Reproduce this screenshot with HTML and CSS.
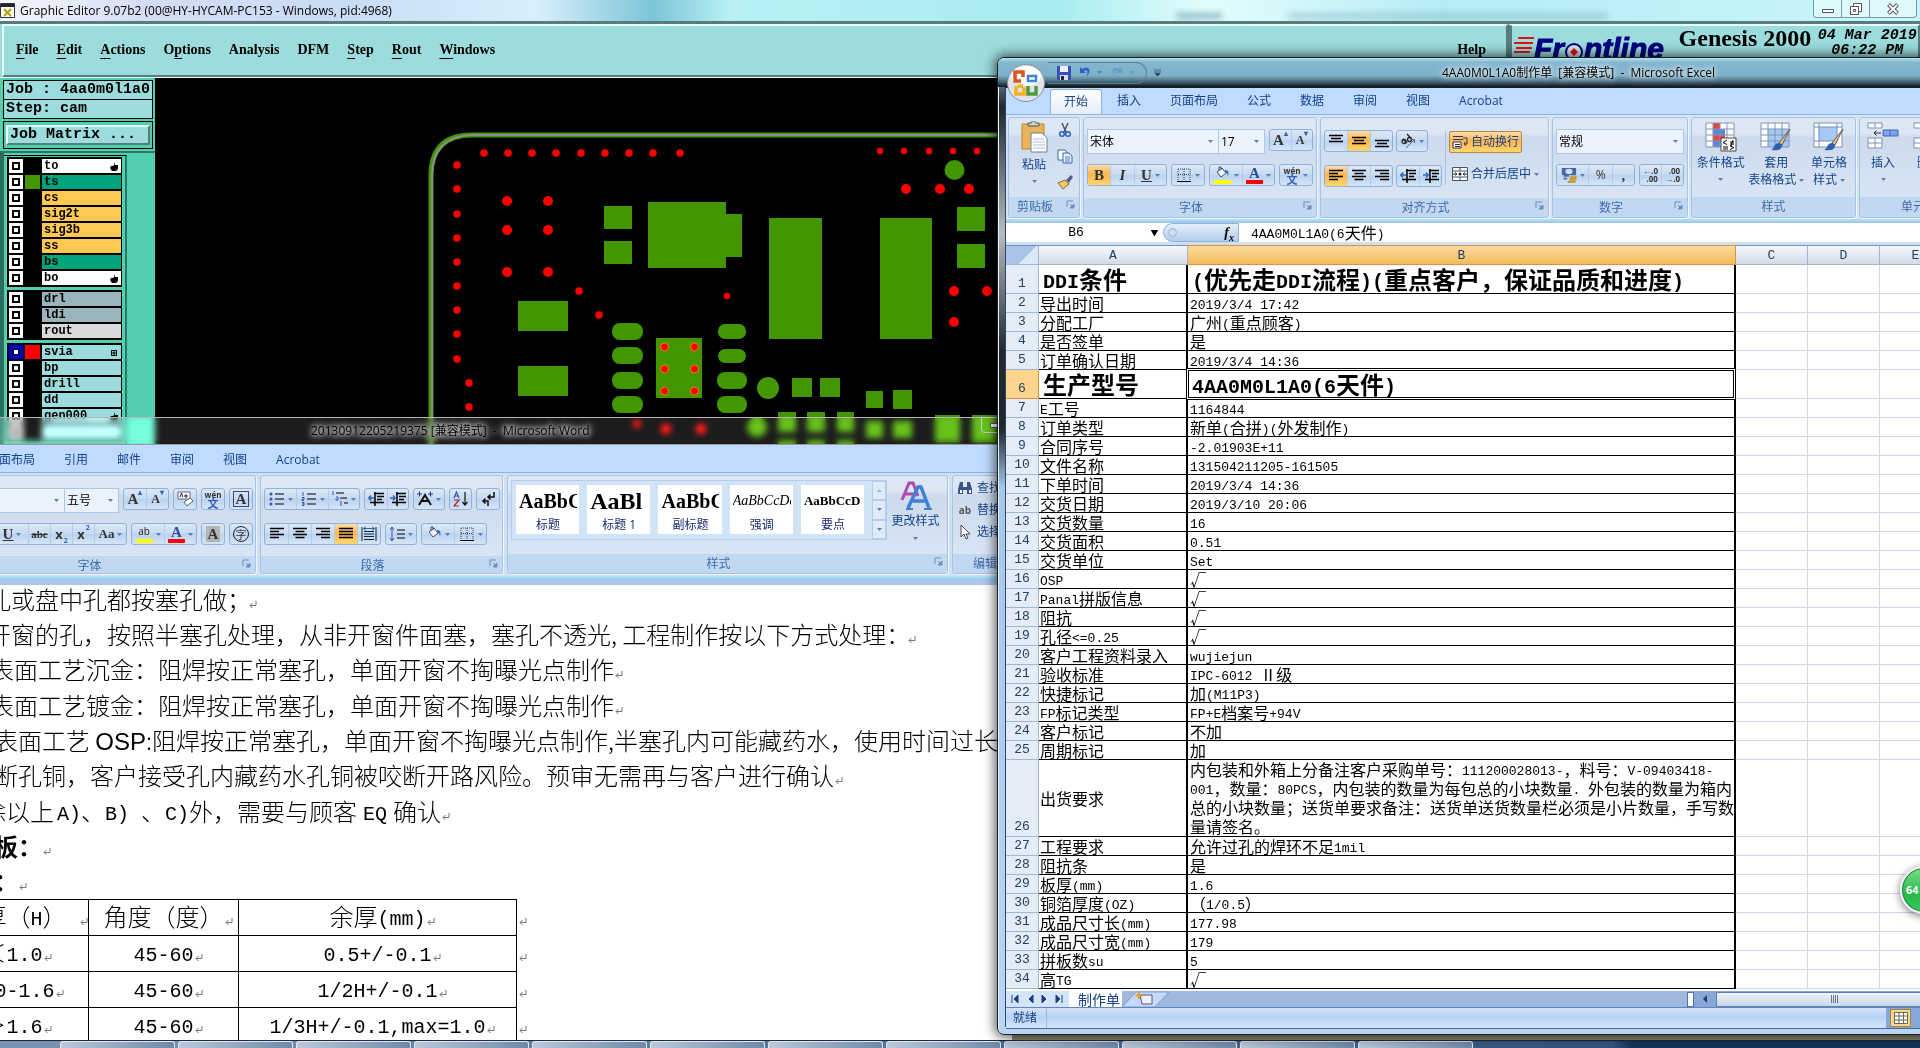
FILE: index.html
```html
<!DOCTYPE html>
<html lang="zh-CN">
<head>
<meta charset="utf-8">
<title>Desktop</title>
<link rel="stylesheet" href="styles.css">
</head>
<body>
<svg class="defs" aria-hidden="true">
  <defs>
    <symbol id="ret" viewBox="0 0 8 8"><path d="M7 0v4.500H1M3.500 2L1 4.500 3.500 7" fill="none" stroke="#777"/></symbol>
    <symbol id="dd" viewBox="0 0 5 3"><path d="M0 0h5L2.500 3z" fill="#5a7fb0"/></symbol>
    <symbol id="launch" viewBox="0 0 9 9"><path d="M1 7V1h6" fill="none" stroke="#6a8fc0"/><path d="M8 4v4H4zM4 4l3 3" stroke="#6a8fc0" fill="#6a8fc0"/></symbol>
    <symbol id="al" viewBox="0 0 16 16"><path d="M1 2.500h14M1 5.500h9M1 8.500h14M1 11.500h9" stroke="#000" stroke-width="1.500"/></symbol>
    <symbol id="ac" viewBox="0 0 16 16"><path d="M1 2.500h14M3.500 5.500h9M1 8.500h14M3.500 11.500h9" stroke="#000" stroke-width="1.500"/></symbol>
    <symbol id="ar" viewBox="0 0 16 16"><path d="M1 2.500h14M6 5.500h9M1 8.500h14M6 11.500h9" stroke="#000" stroke-width="1.500"/></symbol>
    <symbol id="aj" viewBox="0 0 16 16"><path d="M1 2.500h14M1 5.500h14M1 8.500h14M1 11.500h14" stroke="#000" stroke-width="1.500"/></symbol>
    <symbol id="ad" viewBox="0 0 16 16"><path d="M1 1v14M15 1v14M3 5.500h10M3 8h10M3 10.500h10M3 13.500h10" stroke="#123" fill="none"/><path d="M2 2.500h12M5 .5L2.500 2.500 5 4.500M11 .5l2.500 2L11 4.500" stroke="#36a" fill="none"/></symbol>
    <symbol id="vt" viewBox="0 0 16 16"><path d="M1 2.500h14M3 5.500h10M1 8.500h14" stroke="#000" stroke-width="1.500"/></symbol>
    <symbol id="vm" viewBox="0 0 16 16"><path d="M1 4.500h14M3 7.500h10M1 10.500h14" stroke="#000" stroke-width="1.500"/></symbol>
    <symbol id="vb" viewBox="0 0 16 16"><path d="M1 7.500h14M3 10.500h10M1 13.500h14" stroke="#000" stroke-width="1.500"/></symbol>
    <symbol id="indl" viewBox="0 0 16 16"><path d="M6 2.500h10M9 5.500h7M9 8.500h5M2 11.500h14M7 1v14" stroke="#000" stroke-width="1.500"/><path d="M6 7H1M3 4.500L.8 7 3 9.500" stroke="#36b" fill="none" stroke-width="1.500"/></symbol>
    <symbol id="indr" viewBox="0 0 16 16"><path d="M6 2.500h10M9 5.500h7M9 8.500h5M2 11.500h14M7 1v14" stroke="#000" stroke-width="1.500"/><path d="M0 7h5M3 4.500L5.200 7 3 9.500" stroke="#36b" fill="none" stroke-width="1.500"/></symbol>
    <symbol id="borders" viewBox="0 0 16 16"><path d="M2 2h12M2 7.500h12M2 2v12M8 2v12M14 2v12" stroke="#345" stroke-dasharray="1 1" fill="none"/><path d="M1 14.500h14" stroke="#000"/></symbol>
    <symbol id="bucket" viewBox="0 0 16 16"><path d="M3 6l5-4 4 5-5 4z" fill="#eef4fb" stroke="#456"/><path d="M5 5V1h2v3" fill="none" stroke="#456"/><path d="M11 4c4 0 4 3 3 6-1-3-1-3-3-3z" fill="#3a6cb8"/></symbol>
    <symbol id="undo" viewBox="0 0 16 16"><path d="M3 2v6h6L7 6c3-2 5 1 2 6 6-5 4-12-4-8z" fill="#2c5fc4"/></symbol>
    <symbol id="save" viewBox="0 0 16 16"><path d="M1 1h14v14H1z" fill="#3b4fb8"/><path d="M4 1h8v6H4z" fill="#eef"/><path d="M4 10h8v5H4z" fill="#dde"/><path d="M5 11h3v4H5z" fill="#224"/></symbol>
    <symbol id="office" viewBox="0 0 40 40"><circle cx="20" cy="20" r="18.500" fill="#dfe4ea" stroke="#8a929c"/><ellipse cx="20" cy="13" rx="15" ry="10" fill="#fff"/><g fill="none" stroke-width="3.500"><path d="M17 14V9h-8v9h6" stroke="#e0531f"/><path d="M10 23v8h8v-7M12 23h5" stroke="#f4b223"/><path d="M22 13v5h8v-5z" stroke="#3f86d6" stroke-width="2.500"/><path d="M22 23v8h8v-8" stroke="#4d9a3a"/></g></symbol>
    <symbol id="paste" viewBox="0 0 28 32"><path d="M2 3h22v25H2z" fill="#e9b45a" stroke="#b98531"/><path d="M8 5V2h3c1-3 4-3 5 0h3v3z" fill="#c8cdd4" stroke="#555"/><path d="M11 12h11l5 5v14H11z" fill="#fff" stroke="#6a7f9c"/><path d="M13 18h11M13 21h12M13 24h12M13 27h12" stroke="#a9bdd6"/></symbol>
    <symbol id="cut" viewBox="0 0 16 16"><path d="M5 1l4 9M11 1L7 10" stroke="#456" stroke-width="1.500"/><circle cx="5" cy="12" r="2.300" fill="none" stroke="#2c5fc4" stroke-width="1.500"/><circle cx="11" cy="12" r="2.300" fill="none" stroke="#2c5fc4" stroke-width="1.500"/></symbol>
    <symbol id="copy" viewBox="0 0 16 16"><path d="M1 2h7l2 2v8H1z" fill="#fff" stroke="#36a"/><path d="M6 5h6l3 3v7H6z" fill="#e4eefb" stroke="#36a"/><path d="M8 9h5M8 11h5M8 13h5" stroke="#36a" stroke-width=".8"/></symbol>
    <symbol id="brush" viewBox="0 0 16 16"><path d="M1 9l7-3 4 4-6 5z" fill="#f0c766" stroke="#8a6a2a"/><path d="M9 6l5-5 2 2-4 6z" fill="#555e8a"/></symbol>
    <symbol id="orient" viewBox="0 0 16 16"><g fill="none" stroke="#222" stroke-width="1.300"><circle cx="4" cy="8.500" r="2"/><path d="M3 6l4 4M7 1l4.500 5"/><circle cx="9.500" cy="6.500" r="2"/></g><path d="M6 15l8-8M14.500 6.500H11M14.500 6.500V10" stroke="#567" fill="none"/></symbol>
    <symbol id="wrap" viewBox="0 0 16 16"><path d="M1 2.500h10M1 5.500h10" stroke="#335"/><path d="M1 8h8v6H1z" fill="#fff" stroke="#335"/><path d="M3 10.500h5M3 12.500h5M11 4h4v6h-3M13.500 8L12 10l2 2" stroke="#335" fill="none"/></symbol>
    <symbol id="merge" viewBox="0 0 16 16"><path d="M.5 1.500h15v13H.5zM.5 5h15M.5 11h15M8 1v4M8 11v3" fill="#fff" stroke="#456"/><path d="M1 8h4M3 6.500L5 8 3 9.500M15 8h-4M13 6.500L11 8l2 1.500" stroke="#234" fill="none"/><circle cx="8" cy="8" r="1.500" fill="#222"/></symbol>
    <symbol id="money" viewBox="0 0 18 18"><path d="M1 1h16v8H1z" fill="#4668a8"/><ellipse cx="9" cy="5" rx="4" ry="3" fill="#cfe0f4"/><path d="M3 10h6M3 13h4" stroke="#4668a8" stroke-width="2"/><path d="M11 10h6v2h-6zM10 13h7v2h-7zM8 16h8v1.500H8z" fill="#e8b530" stroke="#a27612" stroke-width=".6"/></symbol>
    <symbol id="cond" viewBox="0 0 32 32"><path d="M1 1h28v24H1z" fill="#fff"/><path d="M8 1h7v6H8zM8 13h12v6H8z" fill="#e4483e"/><path d="M8 7h12v6H8zM8 19h7v6H8z" fill="#5c86dd"/><path d="M1 1h28v24H1zM1 7h28M1 13h28M1 19h28M8 1v24M15 1v24M22 1v24" stroke="#8294b4" fill="none"/><path d="M16 16h15v13H16z" fill="#fff" stroke="#444"/><path d="M22 18l-4 2.500 4 2M18 25h5M18 27h5M25 20h4M25 22h4M28 18l-2 6M25 24l4 1.500-4 2" stroke="#000" fill="none"/></symbol>
    <symbol id="fmtt" viewBox="0 0 32 32"><path d="M1 1h28v24H1z" fill="#fff"/><path d="M8 7h21v18H8z" fill="#a8c8f4"/><path d="M1 1h28v24H1zM1 7h28M1 13h28M1 19h28M8 1v24M15 1v24M22 1v24" stroke="#7d92b8" fill="none"/><path d="M30 7L19 21l3 2z" fill="#d8c7a4" stroke="#6b5b44"/><path d="M19 21c-5 0-4 5-8 7 6 1 11 0 11-5z" fill="#2f5fae"/></symbol>
    <symbol id="cells" viewBox="0 0 32 32"><path d="M1 1h28v24H1z" fill="#fff" stroke="#7d92b8"/><path d="M6 5h18v14H6z" fill="#a8c8f4" stroke="#6a8fd0"/><path d="M1 5h5M1 19h5M24 5h5M6 1v4M24 1v4M6 19v6" stroke="#7d92b8"/><path d="M30 7L19 21l3 2z" fill="#d8c7a4" stroke="#6b5b44"/><path d="M19 21c-5 0-4 5-8 7 6 1 11 0 11-5z" fill="#2f5fae"/></symbol>
    <symbol id="ins" viewBox="0 0 32 32"><path d="M1 1h14v5H1zM8 1v5M1 16h14v10H1zM8 16v10M1 21h14" fill="#fff" stroke="#7d92b8"/><path d="M16 8h15v6H16z" fill="#7da4ea" stroke="#3f66b4"/><path d="M23 8v6" stroke="#3f66b4"/><path d="M14 11H7M9.500 8.500L7 11l2.500 2.500" stroke="#223" fill="none"/></symbol>
    <symbol id="del" viewBox="0 0 32 32"><path d="M1 1h14v5H1zM8 1v5M1 16h14v10H1zM8 16v10M1 21h14" fill="#fff" stroke="#7d92b8"/><path d="M8 6v10" stroke="#345" stroke-dasharray="1 1"/></symbol>
    <symbol id="bul" viewBox="0 0 16 16"><path d="M6 3h9M6 8h9M6 13h9" stroke="#000" stroke-width="1.200"/><circle cx="2" cy="3" r="1.500" fill="#35a"/><circle cx="2" cy="8" r="1.500" fill="#35a"/><circle cx="2" cy="13" r="1.500" fill="#35a"/></symbol>
    <symbol id="num" viewBox="0 0 16 16"><path d="M6 3h9M6 8h9M6 13h9" stroke="#000" stroke-width="1.200"/><path d="M2 1v4M1 6.500h2v1.500H1v1.500h2M1 11.500h2v3H1M1 13h2" stroke="#35a" fill="none"/></symbol>
    <symbol id="multi" viewBox="0 0 16 16"><path d="M4 2h8M8 7h7M12 12h4" stroke="#000" stroke-width="1.200"/><path d="M1 0v4M4 6h2v3H4V7.500M9 10v5" stroke="#35a" fill="none"/></symbol>
    <symbol id="asian" viewBox="0 0 16 16"><path d="M2 14L8 4l6 10M4.500 10h7" stroke="#111" stroke-width="2" fill="none"/><path d="M0 3h5M2.500 .5v5M11 3h5M13.500 .5v5" stroke="#2230a0"/></symbol>
    <symbol id="sort" viewBox="0 0 16 16"><path d="M1 7l2.500-6L6 7M2 5h3" stroke="#35a" fill="none" stroke-width="1.200"/><path d="M1 9h5L1 15h5" stroke="#a23" fill="none" stroke-width="1.200"/><path d="M12 1v13M9.500 11l2.500 3 2.500-3" stroke="#111" fill="none" stroke-width="1.200"/></symbol>
    <symbol id="marks" viewBox="0 0 16 16"><path d="M14 1v5H8M10.500 3.500L8 6l2.500 2.500M8 15v-5H3M5.500 7.500L3 10l2.500 2.500" stroke="#111" fill="none" stroke-width="1.500"/></symbol>
    <symbol id="spacing" viewBox="0 0 16 16"><path d="M8 4h8M8 8h8M8 12h8" stroke="#000" stroke-width="1.200"/><path d="M3 1v14M1 4l2-3 2 3M1 12l2 3 2-3" stroke="#35a" fill="none"/></symbol>
    <symbol id="styles" viewBox="0 0 32 32"><path d="M2 20L9 3h4l5 13M5 14h9" stroke="#b04ab0" stroke-width="3" fill="none"/><path d="M8 28L18 7h3l8 21M13 21h12" stroke="#3f7fd4" stroke-width="3.500" fill="none"/><path d="M6 29h7M24 29h8" stroke="#3f7fd4" stroke-width="2"/></symbol>
    <symbol id="find" viewBox="0 0 16 16"><path d="M3 2h3v5h4V2h3l2 7v5h-5v-4H6v4H1V9z" fill="#3a5688"/><path d="M3 10h2v3H3zM12 10h2v3h-2z" fill="#fff"/></symbol>
    <symbol id="arrow" viewBox="0 0 16 16"><path d="M4 1v12l3-3 2 5 2-1-2-4h4z" fill="#fff" stroke="#445"/></symbol>
    <symbol id="erase" viewBox="0 0 16 16"><path d="M1 1h12v7H1z" fill="#fff" stroke="#667"/><path d="M3 6l1.500-4L6 6M8 4h2v2H8z" stroke="#223" fill="none"/><path d="M7 11l6-4 3 3-6 5z" fill="#fff" stroke="#567"/></symbol>
    <symbol id="hand" viewBox="0 0 8 9"><path d="M5 0v3h3v4L6 9H2L0 6l1-2h2l1-1z" fill="#000"/></symbol>
  </defs>
</svg>

<main class="desktop">
  <section class="genesis" aria-label="Graphic Editor">
    <header class="g-title">
      <svg class="g-ico" viewBox="0 0 15 15"><path d="M.5.500h14v14H.5z" fill="#fff" stroke="#333"/><path d="M1 1h13v3H1z" fill="#223"/><path d="M4 6l7 7M11 6l-7 7" stroke="#b8a000" stroke-width="2"/></svg>
      <span class="g-cap">Graphic Editor 9.07b2 (00@HY-HYCAM-PC153 - Windows, pid:4968)</span>
      <i class="smudge s1"></i><i class="smudge s2"></i>
      <div class="winctl">
        <button aria-label="Minimize"><svg width="12" height="12"><path d="M.5 6.500h11v3H.5z" fill="#fff" stroke="#556"/></svg></button>
        <button aria-label="Restore"><svg width="12" height="12"><path d="M3.500.500h8v8h-8z" fill="#fff" stroke="#556"/><path d="M.5 3.500h8v8h-8z" fill="#fff" stroke="#556"/><path d="M3.500 6.500h2v2h-2z" fill="#fff" stroke="#556"/></svg></button>
        <button aria-label="Close"><svg width="12" height="12"><path d="M1.500 1.500l9 9M10.500 1.500l-9 9" stroke="#556" stroke-width="4"/><path d="M2 2l8 8M10 2l-8 8" stroke="#fff" stroke-width="2"/></svg></button>
      </div>
    </header>
    <div class="g-bar">
      <nav class="g-menu">
        <a href="#"><u>F</u>ile</a><a href="#"><u>E</u>dit</a><a href="#"><u>A</u>ctions</a><a href="#">O<u>p</u>tions</a><a href="#">Analysis</a><a href="#">DFM</a><a href="#"><u>S</u>tep</a><a href="#"><u>R</u>out</a><a href="#"><u>W</u>indows</a><a href="#" class="help">Help</a>
      </nav>
      <div class="g-brand">
        <svg class="stripes" viewBox="0 0 20 20"><path d="M4 1h16M0 6h19M2 11h16M0 15h16" stroke="#e01010" stroke-width="2"/></svg>
        <span class="logo">Fr<svg viewBox="0 0 20 20" class="ring"><circle cx="10" cy="10" r="8" fill="#cfe6ea" stroke="#000080" stroke-width="2"/><path d="M10 6l4 4-4 4-4-4z" fill="#e01010"/></svg>ntline</span>
        <strong>Genesis 2000</strong>
        <time>04 Mar 2019<br>06:22 PM</time>
      </div>
    </div>
    <div class="g-work">
      <aside class="g-side">
        <div class="job">Job : 4aa0m0l1a0</div>
        <div class="job">Step: cam</div>
        <div class="jm"><button>Job Matrix ...</button></div>
        <div class="g-lists">
          <div class="layers">
            <div class="lg">
              <label class="w"><input type="checkbox"><i></i><span>to</span><svg class="hand"><use href="#hand"/></svg></label>
              <label class="g"><input type="checkbox"><i class="green"></i><span>ts</span></label>
              <label class="o"><input type="checkbox"><i></i><span>cs</span></label>
              <label class="o"><input type="checkbox"><i></i><span>sig2t</span></label>
              <label class="o"><input type="checkbox"><i></i><span>sig3b</span></label>
              <label class="o"><input type="checkbox"><i></i><span>ss</span></label>
              <label class="g"><input type="checkbox"><i></i><span>bs</span></label>
              <label class="w"><input type="checkbox"><i></i><span>bo</span><svg class="hand"><use href="#hand"/></svg></label>
            </div>
            <div class="lg">
              <label class="d"><input type="checkbox"><i></i><span>drl</span></label>
              <label class="d"><input type="checkbox"><i></i><span>ldi</span></label>
              <label class="r"><input type="checkbox"><i></i><span>rout</span></label>
            </div>
            <div class="lg">
              <label class="c"><input type="checkbox" class="on"><i class="red"></i><span>svia</span><svg class="hand" viewBox="0 0 8 9"><path d="M1.500 2.500h5v5h-5zM4 2v6M1 5h6" fill="none" stroke="#000"/></svg></label>
              <label class="c"><input type="checkbox"><i></i><span>bp</span></label>
              <label class="c"><input type="checkbox"><i></i><span>drill</span></label>
              <label class="c"><input type="checkbox"><i></i><span>dd</span></label>
              <label class="c"><input type="checkbox"><i></i><span>gen000</span><svg class="hand"><use href="#hand"/></svg></label>
              <label class="c last"><input type="checkbox" aria-label="layer"><i></i><span></span></label>
            </div>
          </div>
        </div>
      </aside>
      <svg class="pcb" viewBox="155 78 900 500" width="900" height="500">
        <path d="M431 600V176Q431 135 472 135H1100" fill="none" stroke="#449600" stroke-width="5"/>
        <path d="M432 600V176Q432 136 472 135H1100" fill="none" stroke="#8d8d8d" stroke-width="2"/>
        <g fill="#449600">
          <path d="M604 206h28v23h-28zM604 241h28v23h-28zM648 202h78v12h16v43h-16v11h-78zM769 218h53v121h-53zM880 218h52v121h-52zM957 207h28v24h-28zM957 244h28v24h-28zM518 301h50v30h-50zM518 366h50v30h-50zM656 338h46v60h-46zM792 378h20v19h-20zM820 378h20v19h-20zM866 391h17v17h-17zM893 390h19v19h-19z"/>
          <path d="M778 412h18v20h-18zM807 412h18v20h-18zM837 412h17v20h-17zM866 421h17v17h-17zM893 421h19v17h-19zM935 415h25v27h-25zM972 415h25v27h-25zM778 440h18v8h-18zM807 440h18v8h-18zM837 440h17v8h-17z"/>
          <circle cx="954.500" cy="170" r="10"/><circle cx="768" cy="388" r="11"/><circle cx="757" cy="427" r="10"/>
          <rect x="612" y="323" width="31" height="17" rx="8"/><rect x="612" y="347" width="31" height="17" rx="8"/><rect x="612" y="372" width="31" height="17" rx="8"/><rect x="612" y="396" width="31" height="17" rx="8"/>
          <rect x="718" y="324" width="28" height="15" rx="7"/><rect x="718" y="349" width="28" height="14" rx="7"/><rect x="717" y="372" width="30" height="17" rx="8"/><rect x="717" y="396" width="30" height="17" rx="8"/>
        </g>
        <g fill="none" stroke="#f00" stroke-linecap="round">
          <path stroke-width="7.500" d="M484 153h0M508 153h0M532 153h0M556 153h0M581 153h0M605 153h0M629 153h0M653 153h0M680 153h0M457 165h0M457 189h0M457 214h0M457 238h0M457 262h0M457 286h0M457 310h0M457 334h0M457 359h0M469 383h0M469 407h0M579 291h0M599 315h0M637 424h0"/>
          <path stroke-width="6.500" d="M727 296h0M880 151h0M904 151h0M929 151h0M953 151h0M977 151h0"/>
          <path stroke-width="10" d="M507 201h0M548 201h0M507 230h0M548 230h0M507 272h0M548 272h0M906 189h0M940 189h0M969 189h0M954 291h0M987 291h0M954 322h0M666 429h0M701 429h0"/>
        </g>
        <g fill="#f00" stroke="#f08000"><circle cx="664.500" cy="347" r="4"/><circle cx="694.500" cy="347" r="4"/><circle cx="664.500" cy="369" r="4"/><circle cx="694.500" cy="369" r="4"/><circle cx="664.500" cy="391" r="4"/><circle cx="694.500" cy="391" r="4"/></g>
      </svg>
    </div>
  </section>

  <section class="word" aria-label="Microsoft Word">
    <header class="w-title"><span>20130912205219375 [兼容模式]&nbsp; -&nbsp; Microsoft Word</span><button aria-label="Minimize" class="w-min"><svg width="12" height="6"><path d="M.5.500h11v4H.5z" fill="#fff" stroke="#556"/></svg></button></header>
    <nav class="tabs w-tabs"><a href="#">页面布局</a><a href="#">引用</a><a href="#">邮件</a><a href="#">审阅</a><a href="#">视图</a><a href="#">Acrobat</a></nav>
    <div class="ribbon">
      <div class="group wg1">
        <div class="gb">
          <div class="row end">
            <span class="combo"><select class="sel wide" aria-label="字体"><option></option></select><select class="sel w54" aria-label="字号"><option>五号</option></select></span>
            <span class="set"><button class="b22 A1">A<sup>▴</sup></button><button class="b22 A2">A<sup>▾</sup></button></span>
            <span class="set"><button class="b22" aria-label="清除格式"><svg class="i16"><use href="#erase"/></svg></button></span>
            <span class="set"><button class="b22 wen"><small>wén</small>文</button></span>
            <span class="set"><button class="b22 A1"><span class="boxed">A</span></button></span>
          </div>
          <div class="row end">
            <span class="set"><button class="b32 A1"><u>U</u><svg class="dd"><use href="#dd"/></svg></button><button class="b22 abc"><s>abc</s></button><button class="b22 xx">x<sub>2</sub></button><button class="b22 xx">x<sup>2</sup></button><button class="b32 aa">Aa<svg class="dd"><use href="#dd"/></svg></button></span>
            <span class="set"><button class="b32"><span class="clr yel hl">ab</span><svg class="dd"><use href="#dd"/></svg></button><button class="b32"><span class="clr redc">A</span><svg class="dd"><use href="#dd"/></svg></button></span>
            <span class="set"><button class="b22 A1"><span class="shade">A</span></button></span>
            <span class="set"><button class="b22"><span class="circ">字</span></button></span>
          </div>
        </div>
        <footer>字体<svg class="launch"><use href="#launch"/></svg></footer>
      </div>
      <div class="group wg2">
        <div class="gb">
          <div class="row">
            <span class="set"><button class="b32"><svg class="i16"><use href="#bul"/></svg><svg class="dd"><use href="#dd"/></svg></button><button class="b32"><svg class="i16"><use href="#num"/></svg><svg class="dd"><use href="#dd"/></svg></button><button class="b32"><svg class="i16"><use href="#multi"/></svg><svg class="dd"><use href="#dd"/></svg></button></span>
            <span class="set"><button class="b22"><svg class="i16"><use href="#indl"/></svg></button><button class="b22"><svg class="i16"><use href="#indr"/></svg></button></span>
            <span class="set"><button class="b30"><svg class="i16"><use href="#asian"/></svg><svg class="dd"><use href="#dd"/></svg></button></span>
            <span class="set"><button class="b22"><svg class="i16"><use href="#sort"/></svg></button></span>
            <span class="set"><button class="b22"><svg class="i16"><use href="#marks"/></svg></button></span>
          </div>
          <div class="row">
            <span class="set"><button class="b23"><svg class="i16"><use href="#al"/></svg></button><button class="b23"><svg class="i16"><use href="#ac"/></svg></button><button class="b23"><svg class="i16"><use href="#ar"/></svg></button><button class="b23 act"><svg class="i16"><use href="#aj"/></svg></button><button class="b23"><svg class="i16"><use href="#ad"/></svg></button></span>
            <span class="set"><button class="b30"><svg class="i16"><use href="#spacing"/></svg><svg class="dd"><use href="#dd"/></svg></button></span>
            <span class="set"><button class="b32"><svg class="i16"><use href="#bucket"/></svg><svg class="dd"><use href="#dd"/></svg></button><button class="b32"><svg class="i16"><use href="#borders"/></svg><svg class="dd"><use href="#dd"/></svg></button></span>
          </div>
        </div>
        <footer>段落<svg class="launch"><use href="#launch"/></svg></footer>
      </div>
      <div class="group wg3">
        <div class="gb gal">
          <div class="gallery">
            <button><b class="s22">AaBbC</b><span>标题</span></button>
            <button><b class="s26">AaBl</b><span>标题 1</span></button>
            <button><b class="s22">AaBbC</b><span>副标题</span></button>
            <button><i class="s16">AaBbCcDd</i><span>强调</span></button>
            <button><b class="s14">AaBbCcD</b><span>要点</span></button>
            <div class="gscroll"><button aria-label="上"><svg class="dd up"><use href="#dd"/></svg></button><button aria-label="下"><svg class="dd"><use href="#dd"/></svg></button><button aria-label="更多"><svg class="dd"><use href="#dd"/></svg></button></div>
          </div>
          <button class="big"><svg class="i32"><use href="#styles"/></svg>更改样式<svg class="dd"><use href="#dd"/></svg></button>
        </div>
        <footer>样式<svg class="launch"><use href="#launch"/></svg></footer>
      </div>
      <div class="group wg4">
        <div class="gb edit"><button><svg class="i16"><use href="#find"/></svg>查找</button><button><span class="rep">ab</span>替换</button><button><svg class="i16"><use href="#arrow"/></svg>选择</button></div>
        <footer>编辑</footer>
      </div>
    </div>
    <article class="doc">
      <p class="in1">孔或盘中孔都按塞孔做；<svg class="ret gap"><use href="#ret"/></svg></p>
      <p class="in1">开窗的孔，按照半塞孔处理，从非开窗件面塞，塞孔不透光, 工程制作按以下方式处理：<svg class="ret gap"><use href="#ret"/></svg></p>
      <p class="in2">表面工艺沉金：阻焊按正常塞孔，单面开窗不掏曝光点制作<svg class="ret"><use href="#ret"/></svg></p>
      <p class="in2">表面工艺镀金：阻焊按正常塞孔，单面开窗不掏曝光点制作<svg class="ret"><use href="#ret"/></svg></p>
      <p class="in3">表面工艺 <span class="osp">OSP</span>:阻焊按正常塞孔，单面开窗不掏曝光点制作,半塞孔内可能藏药水，使用时间过长，</p>
      <p class="in3">断孔铜，客户接受孔内藏药水孔铜被咬断开路风险。预审无需再与客户进行确认<svg class="ret"><use href="#ret"/></svg></p>
      <p class="in0">除以上<span class="n lead">A)</span>、<span class="n">B) </span>、<span class="n">C)</span>外，需要与顾客<span class="n eq">EQ</span>确认<svg class="ret"><use href="#ret"/></svg></p>
      <p class="in3 bold">板：<svg class="ret"><use href="#ret"/></svg></p>
      <p class="in3 bold">：<svg class="ret"><use href="#ret"/></svg></p>
      <table class="wt">
        <tr><td>板厚（<span class="n">H</span>）<svg class="ret hang far"><use href="#ret"/></svg></td><td>角度（度）<svg class="ret hang"><use href="#ret"/></svg></td><td>余厚<span class="n">(mm)</span><svg class="ret hang"><use href="#ret"/></svg></td><td><svg class="ret"><use href="#ret"/></svg></td></tr>
        <tr><td>＜<span class="n">1.0</span><svg class="ret hang"><use href="#ret"/></svg></td><td><span class="n">45-60</span><svg class="ret hang"><use href="#ret"/></svg></td><td><span class="n">0.5+/-0.1</span><svg class="ret hang"><use href="#ret"/></svg></td><td><svg class="ret"><use href="#ret"/></svg></td></tr>
        <tr><td><span class="n">1.0-1.6</span><svg class="ret hang"><use href="#ret"/></svg></td><td><span class="n">45-60</span><svg class="ret hang"><use href="#ret"/></svg></td><td><span class="n">1/2H+/-0.1</span><svg class="ret hang"><use href="#ret"/></svg></td><td><svg class="ret"><use href="#ret"/></svg></td></tr>
        <tr><td>＞<span class="n">1.6</span><svg class="ret hang"><use href="#ret"/></svg></td><td><span class="n">45-60</span><svg class="ret hang"><use href="#ret"/></svg></td><td><span class="n">1/3H+/-0.1,max=1.0</span><svg class="ret hang"><use href="#ret"/></svg></td><td><svg class="ret"><use href="#ret"/></svg></td></tr>
      </table>
    </article>
  </section>

  <div class="taskbar"><i class="orb"></i><i></i><i></i><i></i><i></i><i></i><i></i><i></i><i></i><i></i><i></i><i></i><i></i></div>

  <section class="excel" aria-label="Microsoft Excel">
    <header class="x-title">
      <svg class="office"><use href="#office"/></svg>
      <div class="qat"><svg class="i16"><use href="#save"/></svg><svg class="i16 un"><use href="#undo"/></svg><svg class="dd"><use href="#dd"/></svg><svg class="i16 redo"><use href="#undo"/></svg><svg class="dd lite"><use href="#dd"/></svg></div>
      <svg class="cust" viewBox="0 0 7 7"><path d="M0 1h7M0 3h7M1 4.500h5L3.500 7z" stroke="#235" stroke-width=".6" fill="#235"/></svg>
      <h1>4AA0M0L1A0制作单&nbsp; [兼容模式]&nbsp; -&nbsp; Microsoft Excel</h1>
    </header>
    <div class="x-body">
      <nav class="tabs x-tabs"><a href="#" class="cur">开始</a><a href="#">插入</a><a href="#">页面布局</a><a href="#">公式</a><a href="#">数据</a><a href="#">审阅</a><a href="#">视图</a><a href="#">Acrobat</a></nav>
      <div class="ribbon">
        <div class="group xg1">
          <div class="gb clip">
            <button class="big"><svg class="i32"><use href="#paste"/></svg>粘贴<svg class="dd"><use href="#dd"/></svg></button>
            <div class="clip3"><button aria-label="剪切"><svg class="i16"><use href="#cut"/></svg></button><button aria-label="复制"><svg class="i16"><use href="#copy"/></svg></button><button aria-label="格式刷"><svg class="i16"><use href="#brush"/></svg></button></div>
          </div>
          <footer>剪贴板<svg class="launch"><use href="#launch"/></svg></footer>
        </div>
        <div class="group xg2">
          <div class="gb">
            <div class="row">
              <span class="combo"><select class="sel w131" aria-label="字体"><option>宋体</option></select><select class="sel w46" aria-label="字号"><option>17</option></select></span>
              <span class="set"><button class="b22 A1">A<sup>▴</sup></button><button class="b22 A2">A<sup>▾</sup></button></span>
            </div>
            <div class="row">
              <span class="set"><button class="b22 A1 act">B</button><button class="b24 A1"><em>I</em></button><button class="b32 A1"><u>U</u><svg class="dd"><use href="#dd"/></svg></button></span>
              <span class="set"><button class="b32"><svg class="i16"><use href="#borders"/></svg><svg class="dd"><use href="#dd"/></svg></button></span>
              <span class="set"><button class="b32"><span class="clr yel"><svg class="i16"><use href="#bucket"/></svg></span><svg class="dd"><use href="#dd"/></svg></button><button class="b32"><span class="clr redc">A</span><svg class="dd"><use href="#dd"/></svg></button></span>
              <span class="set"><button class="b32"><span class="wen"><small>wén</small>文</span><svg class="dd"><use href="#dd"/></svg></button></span>
            </div>
          </div>
          <footer>字体<svg class="launch"><use href="#launch"/></svg></footer>
        </div>
        <div class="group xg3">
          <div class="gb split">
            <div>
              <div class="row">
                <span class="set"><button class="b22"><svg class="i16"><use href="#vt"/></svg></button><button class="b23 act"><svg class="i16"><use href="#vm"/></svg></button><button class="b22"><svg class="i16"><use href="#vb"/></svg></button></span>
                <span class="set"><button class="b30"><svg class="i16"><use href="#orient"/></svg><svg class="dd"><use href="#dd"/></svg></button></span>
              </div>
              <div class="row">
                <span class="set"><button class="b22 act"><svg class="i16"><use href="#al"/></svg></button><button class="b23"><svg class="i16"><use href="#ac"/></svg></button><button class="b22"><svg class="i16"><use href="#ar"/></svg></button></span>
                <span class="set"><button class="b22"><svg class="i16"><use href="#indl"/></svg></button><button class="b22"><svg class="i16"><use href="#indr"/></svg></button></span>
              </div>
            </div>
            <div class="mrg">
              <button class="txt act"><svg class="i16"><use href="#wrap"/></svg>自动换行</button>
              <button class="txt"><svg class="i16"><use href="#merge"/></svg>合并后居中<svg class="dd"><use href="#dd"/></svg></button>
            </div>
          </div>
          <footer>对齐方式<svg class="launch"><use href="#launch"/></svg></footer>
        </div>
        <div class="group xg4">
          <div class="gb">
            <div class="row"><span class="combo"><select class="sel w128" aria-label="数字格式"><option>常规</option></select></span></div>
            <div class="row">
              <span class="set"><button class="b32"><svg class="i16"><use href="#money"/></svg><svg class="dd"><use href="#dd"/></svg></button><button class="b24 pct">%</button><button class="b22 A1">,</button></span>
              <span class="set"><button class="b22 dec"><span>←.0<br>.00</span></button><button class="b22 dec"><span>.00<br>→.0</span></button></span>
            </div>
          </div>
          <footer>数字<svg class="launch"><use href="#launch"/></svg></footer>
        </div>
        <div class="group xg5">
          <div class="gb bigs">
            <button class="big"><svg class="i32"><use href="#cond"/></svg>条件格式<svg class="dd"><use href="#dd"/></svg></button>
            <button class="big"><svg class="i32"><use href="#fmtt"/></svg>套用<span>表格格式 <svg class="dd"><use href="#dd"/></svg></span></button>
            <button class="big"><svg class="i32"><use href="#cells"/></svg>单元格<span>样式 <svg class="dd"><use href="#dd"/></svg></span></button>
          </div>
          <footer class="plain">样式</footer>
        </div>
        <div class="group xg6">
          <div class="gb bigs"><button class="big"><svg class="i32"><use href="#ins"/></svg>插入<svg class="dd"><use href="#dd"/></svg></button><button class="big"><svg class="i32"><use href="#del"/></svg>删除<svg class="dd"><use href="#dd"/></svg></button></div>
          <footer class="plain">单元格</footer>
        </div>
      </div>
      <div class="fbar">
        <input class="name" aria-label="名称框" value="B6"><span class="tri">▼</span><span class="fx"><i></i><em>f<sub>x</sub></em></span>
        <div class="formula"><span class="n">4AA0M0L1A0(6</span>天件<span class="n">)</span></div>
      </div>
      <table class="grid">
        <colgroup><col class="c0"><col class="ca"><col><col class="cc"><col class="cc"><col class="cc"></colgroup>
        <thead><tr><th class="corner"></th><th>A</th><th class="sel-h">B</th><th>C</th><th>D</th><th>E</th></tr></thead>
        <tbody>
        <tr class="tall"><th>1</th><td><span class="n">DDI</span>条件</td><td><span class="n">(</span>优先走<span class="n">DDI</span>流程<span class="n">)(</span>重点客户，保证品质和进度<span class="n">)</span></td><td></td><td></td><td></td></tr>
        <tr><th>2</th><td>导出时间</td><td><span class="n">2019/3/4 17:42</span></td><td></td><td></td><td></td></tr>
        <tr><th>3</th><td>分配工厂</td><td>广州<span class="n">(</span>重点顾客<span class="n">)</span></td><td></td><td></td><td></td></tr>
        <tr><th>4</th><td>是否签单</td><td>是</td><td></td><td></td><td></td></tr>
        <tr><th>5</th><td>订单确认日期</td><td><span class="n">2019/3/4 14:36</span></td><td></td><td></td><td></td></tr>
        <tr class="tall cur"><th>6</th><td>生产型号</td><td class="active"><span class="n">4AA0M0L1A0(6</span>天件<span class="n">)</span></td><td></td><td></td><td></td></tr>
        <tr><th>7</th><td><span class="n">E</span>工号</td><td><span class="n">1164844</span></td><td></td><td></td><td></td></tr>
        <tr><th>8</th><td>订单类型</td><td>新单<span class="n">(</span>合拼<span class="n">)(</span>外发制作<span class="n">)</span></td><td></td><td></td><td></td></tr>
        <tr><th>9</th><td>合同序号</td><td><span class="n">-2.01903E+11</span></td><td></td><td></td><td></td></tr>
        <tr><th>10</th><td>文件名称</td><td><span class="n">131504211205-161505</span></td><td></td><td></td><td></td></tr>
        <tr><th>11</th><td>下单时间</td><td><span class="n">2019/3/4 14:36</span></td><td></td><td></td><td></td></tr>
        <tr><th>12</th><td>交货日期</td><td><span class="n">2019/3/10 20:06</span></td><td></td><td></td><td></td></tr>
        <tr><th>13</th><td>交货数量</td><td><span class="n">16</span></td><td></td><td></td><td></td></tr>
        <tr><th>14</th><td>交货面积</td><td><span class="n">0.51</span></td><td></td><td></td><td></td></tr>
        <tr><th>15</th><td>交货单位</td><td><span class="n">Set</span></td><td></td><td></td><td></td></tr>
        <tr><th>16</th><td><span class="n">OSP</span></td><td>√</td><td></td><td></td><td></td></tr>
        <tr><th>17</th><td><span class="n">Panal</span>拼版信息</td><td>√</td><td></td><td></td><td></td></tr>
        <tr><th>18</th><td>阻抗</td><td>√</td><td></td><td></td><td></td></tr>
        <tr><th>19</th><td>孔径<span class="n">&lt;=0.25</span></td><td>√</td><td></td><td></td><td></td></tr>
        <tr><th>20</th><td>客户工程资料录入</td><td><span class="n">wujiejun</span></td><td></td><td></td><td></td></tr>
        <tr><th>21</th><td>验收标准</td><td><span class="n">IPC-6012 </span>Ⅱ级</td><td></td><td></td><td></td></tr>
        <tr><th>22</th><td>快捷标记</td><td>加<span class="n">(M11P3)</span></td><td></td><td></td><td></td></tr>
        <tr><th>23</th><td><span class="n">FP</span>标记类型</td><td><span class="n">FP+E</span>档案号<span class="n">+94V</span></td><td></td><td></td><td></td></tr>
        <tr><th>24</th><td>客户标记</td><td>不加</td><td></td><td></td><td></td></tr>
        <tr><th>25</th><td>周期标记</td><td>加</td><td></td><td></td><td></td></tr>
        <tr class="note"><th>26</th><td>出货要求</td><td>内包装和外箱上分备注客户采购单号：<span class="n">111200028013-</span>，料号：<span class="n">V-09403418-</span><br><span class="n">001</span>，数量：<span class="n">80PCS</span>，内包装的数量为每包总的小块数量<span class="n">. </span>外包装的数量为箱内<br>总的小块数量；送货单要求备注：送货单送货数量栏必须是小片数量，手写数<br>量请签名。</td><td></td><td></td><td></td></tr>
        <tr><th>27</th><td>工程要求</td><td>允许过孔的焊环不足<span class="n">1mil</span></td><td></td><td></td><td></td></tr>
        <tr><th>28</th><td>阻抗条</td><td>是</td><td></td><td></td><td></td></tr>
        <tr><th>29</th><td>板厚<span class="n">(mm)</span></td><td><span class="n">1.6</span></td><td></td><td></td><td></td></tr>
        <tr><th>30</th><td>铜箔厚度<span class="n">(OZ)</span></td><td>（<span class="n">1/0.5</span>）</td><td></td><td></td><td></td></tr>
        <tr><th>31</th><td>成品尺寸长<span class="n">(mm)</span></td><td><span class="n">177.98</span></td><td></td><td></td><td></td></tr>
        <tr><th>32</th><td>成品尺寸宽<span class="n">(mm)</span></td><td><span class="n">179</span></td><td></td><td></td><td></td></tr>
        <tr><th>33</th><td>拼板数<span class="n">su</span></td><td><span class="n">5</span></td><td></td><td></td><td></td></tr>
        <tr><th>34</th><td>高<span class="n">TG</span></td><td>√</td><td></td><td></td><td></td></tr>
        </tbody>
      </table>
      <div class="sheets">
        <div class="snav"><svg viewBox="0 0 60 14"><path d="M6 3v8M12 3v8L8 7zM27 3v8l-4-4zM36 3v8l4-4zM50 3v8l4-4zM56 3v8" fill="#1d3f7c" stroke="#1d3f7c"/></svg></div>
        <a href="#" class="sheet">制作单</a>
        <svg class="newsheet" viewBox="0 0 48 16"><path d="M0 16L14 1h33L33 16z" fill="#c5dafa" stroke="#7d9bd0"/><path d="M18 4h12v9H20z" fill="#eef" stroke="#557"/><path d="M17 1v7M13.500 4.500h7" stroke="#e8a030" stroke-width="2"/></svg>
        <div class="hscroll"><i class="splitter"></i><svg width="14" height="16"><path d="M9 4v8L5 8z" fill="#1d3f7c"/></svg><i class="thumb"><svg width="9" height="8"><path d="M1.500 0v8M3.500 0v8M5.500 0v8M7.500 0v8" stroke="#678"/></svg></i></div>
      </div>
      <footer class="status"><span>就绪</span><div class="views"><button aria-label="普通"><svg width="14" height="12"><path d="M.5.500h13v11H.5zM0 4h14M0 8h14M5 0v12M9.500 0v12" fill="#fff" stroke="#665"/></svg></button></div></footer>
    </div>
  </section>
  <div class="ball">64</div>
</main>
</body>
</html>
```
FILE: styles.css
```css
:root {
  --cjk: "Noto Sans CJK SC", sans-serif;
  --ui: "Open Sans", "Noto Sans CJK SC", sans-serif;
  --mono: "Liberation Mono", monospace;
  --serif: "Liberation Serif", serif;
}
* { box-sizing: border-box; }
body { margin: 0; font: 12px/16px var(--ui); overflow: hidden; background: #000; }
button { font: inherit; color: inherit; background: none; border: 0; padding: 0; }
a { color: inherit; text-decoration: none; }
.defs { position: absolute; width: 0; height: 0; }
.desktop { position: relative; width: 100%; height: 100vh; min-height: 1048px; overflow: hidden; background: #8f8a74; }
.i16 { width: 16px; height: 16px; flex: none; }
.i32 { width: 32px; height: 32px; }
.dd { width: 5px; height: 3px; flex: none; }

/* Genesis window */
.genesis { position: absolute; inset: 0 0 16px; background: #000; display: flex; flex-direction: column; }
.g-title { height: 21px; display: flex; align-items: center; gap: 5px; position: relative; background: linear-gradient(90deg, #f4f6fb, #d4dcf5 8%, #c8dcf4 18%, #d9effb 28%, #7cc4d8 34%, #b8f0f4 38%, #a8ecee 55%, #e2fdfd 63%, #b6ecf4 75%, #c8f6fa); }
.g-ico { width: 15px; height: 15px; }
.g-cap { font: 12px/18px "Open Sans", sans-serif; }
.smudge { position: absolute; top: 13px; height: 6px; filter: blur(3px); background: #5f8f9c; opacity: .6; }
.s1 { left: 1176px; width: 46px; }
.s2 { left: 1288px; width: 320px; opacity: .35; }
.winctl { margin-left: auto; align-self: flex-start; display: flex; height: 18px; margin-right: 3px; border: 1px solid #7c97a6; border-top: 0; border-radius: 0 0 4px 4px; background: #ffffff70; }
.winctl button { width: 28px; display: grid; place-items: center; border-right: 1px solid #7c97a6; }
.winctl button:last-child { width: 46px; border: 0; }
.g-bar { height: 56px; display: flex; background: #9cdcdc; border-top: 3px solid #587c7e; }
.g-menu { flex: 1; display: flex; align-items: center; gap: 18px; padding: 0 20px 2px 12px; margin-left: 2px; border: 2px solid #587c7e; border-top-color: #e8ffff; border-left-color: #e8ffff; font: bold 14px/18px var(--serif); }
.g-menu u { text-underline-offset: 4px; }
.help { margin-left: auto; }
.g-brand { width: 412px; border: 2px solid #587c7e; border-width: 2px 2px 2px 4px; border-top-color: #e8ffff; display: flex; align-items: flex-start; }
.stripes { width: 20px; height: 20px; margin: 11px 0 0 2px; }
.logo { font: italic bold 30px/30px "Liberation Sans", sans-serif; color: #000080; -webkit-text-stroke: 1px #000080; margin: 8px 5px 0 0; width: 140px; white-space: nowrap; }
.ring { width: 20px; height: 20px; vertical-align: -3px; }
.g-brand strong { font: bold 24px/24px var(--serif); width: 138px; white-space: nowrap; }
.g-brand time { font: italic bold 15px/15px var(--mono); text-align: center; width: 102px; margin-top: 2px; white-space: nowrap; }
.g-work { flex: 1; display: flex; min-height: 0; overflow: hidden; border-top: 1px solid #e8ffff; }
.g-side { width: 155px; background: #52ceb0; padding: 2px 2px 0 3px; font: bold 15px/17px var(--mono); display: flex; flex-direction: column; flex: none; }
.job { height: 20px; border: 1px solid #000; margin-bottom: -1px; background: #9cdcdc; padding-left: 2px; white-space: nowrap; flex: none; }
.jm { border: 1px solid #000; margin-top: 3px; padding: 3px 2px; height: 28px; flex: none; }
.jm button { width: 100%; height: 20px; text-align: left; padding-left: 2px; background: #9cdcdc; border: 2px solid #e8ffff; border-right-color: #587c7e; border-bottom-color: #587c7e; line-height: 16px; }
.g-lists { margin: 2px -2px 0 -3px; flex: 1; border-top: 2px solid #2c7767; border-left: 4px solid #2c6d60; }
.layers { width: 123px; height: 100%; border-right: 2px solid #2c7767; border-top: 1px solid #000; margin-top: 2px; padding: 1px 3px; display: flex; flex-direction: column; gap: 3px; }
.lg { background: #000; padding: 1px 1px 1px 2px; }
.lg label { display: flex; height: 16px; padding: 1px 0; gap: 2px; position: relative; font: bold 12px/14px var(--mono); }
.lg input { appearance: none; width: 14px; height: 14px; margin: 0; background: #fff; box-shadow: inset 0 0 0 3px #fff, inset 0 0 0 5px #000; flex: none; }
.lg input.on { box-shadow: inset 0 0 0 3px #0000c8, inset 0 0 0 5px #000060; }
.lg i { width: 15px; flex: none; }
.lg i.green { background: #449600; }
.lg i.red { background: #f00; }
.lg span { flex: 1; padding-left: 2px; }
.w span { background: #fff; } .g span { background: #00a47c; } .o span { background: #ffc850; }
.d span { background: #9ab4bc; } .r span { background: #dadada; } .c span { background: #9cdcdc; }
.hand { position: absolute; right: 3px; top: 4px; width: 8px; height: 9px; }
.pcb { flex: none; }

/* shared Office ribbon */
.tabs { display: flex; gap: 1px; height: 28px; background: #bfdbff; color: #15428b; font: 12px/24px var(--ui); border-bottom: 1px solid #8db2e3; align-items: flex-end; }
.tabs a { padding: 0 14px; height: 25px; }
.tabs .cur { background: linear-gradient(#fff, #e4edf8); border: 1px solid #8db2e3; border-bottom: 0; border-radius: 3px 3px 0 0; padding: 0 13px; }
.ribbon { display: flex; gap: 3px; padding: 2px 3px; height: 106px; background: linear-gradient(#dbe6f4, #cfdff2 30%, #d8e6f6); border-bottom: 2px solid #a8e0f4; color: #15428b; }
.group { display: flex; flex-direction: column; border: 1px solid #a5c3e4; border-radius: 3px; box-shadow: 1px 1px 0 #eef5fd; background: linear-gradient(#dde7f3 15%, #ccdaec 20%, #dce8f6); overflow: hidden; flex: none; white-space: nowrap; }
.gb { height: 80px; padding: 11px 3px 0; }
.group footer { height: 20px; background: #c1d8f0; color: #3e6aaa; text-align: center; line-height: 19px; position: relative; padding-right: 18px; }
.group footer.plain { padding-right: 0; }
.launch { position: absolute; right: 4px; top: 3px; width: 9px; height: 9px; }
.row { display: flex; gap: 4px; height: 35px; align-items: flex-start; }
.row.end { justify-content: flex-end; }
.combo { display: flex; }
.sel { appearance: none; height: 25px; border: 1px solid #abc8ec; border-radius: 0; background: #eaf2fb url("data:image/svg+xml,%3Csvg xmlns='http://www.w3.org/2000/svg' width='5' height='3'%3E%3Cpath d='M0 0h5L2.500 3z' fill='%235a7fb0'/%3E%3C/svg%3E") no-repeat right 5px center; padding: 0 2px; font: 12px/20px var(--ui); color: #000; }
.sel + .sel { margin-left: -1px; }
.w131 { width: 132px; } .w46 { width: 47px; } .w54 { width: 55px; } .w128 { width: 128px; } .wide { width: 97px; }
.set { display: flex; border: 1px solid #8fb1dc; border-radius: 3px; height: 22px; background: linear-gradient(#dce8f6, #c6daf1 48%, #b9d2ef 50%, #d5e5f6); overflow: hidden; }
.set button { display: flex; align-items: center; justify-content: center; gap: 3px; height: 20px; color: #333; }
.set button + button { border-left: 1px solid #b3cbe8; }
.b22 { width: 22px; } .b23 { width: 23px; } .b24 { width: 24px; } .b30 { width: 30px; } .b32 { width: 32px; }
.act { background: linear-gradient(#fbdcae, #fcb750 45%, #ffd66b); }
.A1 { font: bold 15px/20px var(--serif); }
.A2 { font: bold 12px/20px var(--serif); }
.A1 sup, .A2 sup { font-size: 8px; line-height: 8px; color: #36a; margin-left: -3px; align-self: flex-start; }
.boxed { border: 1px solid #446; line-height: 14px; padding: 0 2px; }
.shade { background: #b4b4b4; line-height: 16px; padding: 0 2px; }
.circ { border: 1px solid #223; border-radius: 50%; width: 16px; height: 16px; font: 11px/14px var(--cjk); }
.wen { flex-direction: column; display: flex; align-items: center; font: bold 11px/10px var(--cjk); color: #3a5cc0; }
.set .wen { gap: 0; color: #3a5cc0; }
.wen small { font: bold 8px/7px "Open Sans", sans-serif; color: #333; }
.abc { font: bold 11px/18px var(--serif); }
.xx { font: bold 13px/18px "Open Sans", sans-serif; }
.xx sub, .xx sup { font-size: 7px; line-height: 7px; color: #36a; margin-left: -2px; }
.set .xx sub { align-self: flex-end; } .set .xx sup { align-self: flex-start; }
.aa { font: bold 13px/18px var(--serif); }
.clr { width: 17px; height: 18px; border-bottom: 4px solid #f00; font: bold 15px/14px var(--serif); color: #2a4f9a; text-align: center; overflow: hidden; }
.clr.yel { border-color: #ff0; }
.clr.hl { font: 10px/13px "Open Sans", sans-serif; color: #222; }
.pct { font: 12px/18px "Open Sans", sans-serif; }
.dec { font: bold 8px/8px "Open Sans", sans-serif; text-align: right; }
.big { display: flex; flex-direction: column; align-items: center; line-height: 17px; }
.big > .dd { margin-top: 7px; }
.big .dd { vertical-align: middle; }

/* Word window */
.word { position: absolute; left: -28px; width: 1040px; top: 417px; bottom: 8px; display: flex; flex-direction: column; }
.w-title { height: 28px; flex: none; border-top: 1px solid #b5b5b5; border-bottom: 1px solid #9a9a9a; display: flex; align-items: center; backdrop-filter: blur(3px) brightness(1.25); background: #ffffff1c; padding-left: 339px; font: 12px/18px var(--ui); color: #000; position: relative; }
.w-title span { text-shadow: 0 0 4px #ddd, 0 0 6px #ccc, 0 0 8px #bbb, 0 0 10px #999; }
.w-min { position: absolute; left: 1009px; top: -1px; width: 28px; height: 16px; border: 1px solid #ccc; border-radius: 0 0 4px 4px; text-align: left; padding-left: 8px; line-height: 14px; }
.w-tabs { padding-left: 1px; flex: none; line-height: 26px; }
.word .ribbon { flex: none; padding-left: 0; gap: 4px; height: 105px; background: #cfe0f4; }
.wg1 { width: 315px; margin-left: -31px; } .wg2 { width: 243px; } .wg3 { width: 441px; } .wg4 { width: 90px; }
.wg1 .gb, .wg2 .gb { padding-right: 2px; padding-top: 12px; }
.gal { display: flex; padding: 4px 3px 0; }
.gallery { display: flex; gap: 8px; border: 1px solid #b3cdee; height: 60px; padding: 4px 0 0 4px; width: 376px; background: #d3e3f6; }
.gallery > button { width: 64px; height: 49px; background: #fff; display: flex; flex-direction: column; color: #1a2a70; overflow: hidden; padding-left: 3px; }
.gallery > button > :first-child { height: 32px; line-height: 32px; font-family: var(--serif); color: #000; width: 58px; overflow: hidden; text-align: left; }
.gallery > button span { width: 58px; text-align: center; }
.s22 { font-size: 20px; } .s26 { font-size: 24px; } .s16 { font-size: 14px; } .s14 { font-size: 13px; }
.gscroll { display: flex; flex-direction: column; margin: -4px 0 0 auto; width: 14px; }
.gscroll button { flex: 1; display: grid; place-items: center; border: 1px solid #b3cdee; background: #dfebf9; }
.up { transform: rotate(180deg); opacity: .5; }
.gal .big { width: 60px; }
.gal .big > .dd { margin-top: 8px; }
.gb.edit { padding: 3px 4px 0; display: flex; flex-direction: column; gap: 5px; }
.edit button { display: flex; gap: 4px; align-items: center; line-height: 17px; }
.rep { width: 16px; font: bold 10px/12px "Open Sans", sans-serif; color: #555; }
.wg4 footer { text-align: left; padding-left: 20px; }
.doc { flex: 1; background: #fff; border-top: 7px solid #a9c6ec; overflow: hidden; font: 300 24px/35px var(--cjk); color: #000; min-height: 0; }
.doc p { margin: 0; height: 35px; white-space: nowrap; line-height: 27px; }
.doc p:nth-child(3n) { margin-bottom: 1px; }
.in0 { padding-left: 10px; } .in1 { padding-left: 15px; } .in2 { padding-left: 18px; } .in3 { padding-left: 22px; }
.bold { font-weight: 700; }
.osp { font: 24px/24px "Liberation Sans", sans-serif; }
.n { font-family: var(--mono); font-size: 13px; line-height: 0; white-space: pre; font-weight: 400; vertical-align: 1px; }
.doc .n { font-size: 20px; }
.lead { padding-left: 3px; }
.eq { padding: 0 6px; }
.ret { width: 8px; height: 8px; margin-left: 1px; }
.ret.gap { margin-left: -2px; }
.ret.hang { margin-right: -9px; }
.ret.far { margin-left: 13px; margin-right: -21px; }
.wt { border-collapse: collapse; margin: -4px 0 0 -36px; table-layout: fixed; width: 620px; white-space: nowrap; }
.wt td { border: 1px solid #000; height: 36px; text-align: center; padding: 0 0 3px; line-height: 30px; width: 152px; }
.wt td:nth-child(2) { width: 150px; }
.wt td:nth-child(3) { width: 278px; }
.wt td:nth-child(4) { border: 0; width: 40px; text-align: left; padding-left: 1px; }

/* task bar */
.taskbar { position: absolute; left: 0; right: 0; bottom: 0; height: 8px; display: flex; gap: 3px; background: linear-gradient(90deg, #7b93b3, #33567f 84%, #12345c 85%); border-top: 1px solid #1c2a3a; }
.taskbar i { width: 115px; border: 1px solid #dfe9f4; border-bottom: 0; border-radius: 3px 3px 0 0; background: linear-gradient(90deg, #b9c9dc, #6f89aa); }
.taskbar .orb { width: 57px; border: 0; background: none; }

/* Excel window */
.excel { position: absolute; left: 997px; right: -33px; top: 57px; bottom: 13px; border: 1px solid #16202a; border-radius: 7px 0 0 7px; background: linear-gradient(#8fc0d6, #20262c 5%, #b7bcc0 18%, #23282e 30%, #20262c 38%, #a7c6ea 44%, #b8d6f4); box-shadow: 0 0 12px 2px #000a, inset 1px 1px 0 #e4f4fc; padding-left: 7px; padding-bottom: 7px; display: flex; flex-direction: column; }
.x-title { height: 29px; flex: none; margin-left: -7px; border-radius: 7px 0 0 0; display: flex; align-items: center; position: relative; background: linear-gradient(#b4e2ea, #84b6d0 15%, #7fb0c8 60%, #4a6e82 80%, #101418); }
.x-title h1 { position: absolute; left: 444px; top: 6px; margin: 0; font: 12px/18px var(--ui); white-space: nowrap; text-shadow: 0 0 5px #fff, 0 0 8px #fff; }
.office { position: absolute; left: 8px; top: 5px; width: 40px; height: 40px; z-index: 2; }
.qat { margin: 0 0 0 50px; width: 99px; height: 22px; border: 1px solid #5e7f92; border-left: 0; border-radius: 0 11px 11px 0; display: flex; align-items: center; padding-left: 8px; gap: 4px; }
.un { margin-left: 1px; } .redo { transform: scaleX(-1); opacity: .25; margin-left: 3px; } .lite { opacity: .5; }
.cust { width: 7px; height: 7px; margin-left: 7px; }
.x-body { flex: 1; min-height: 0; display: flex; flex-direction: column; border-left: 1px solid #2a4668; border-top: 1px solid #14202c; background: #fff; }
.x-tabs { padding-left: 44px; height: 27px; flex: none; }
.excel .ribbon { flex: none; padding-left: 2px; height: 106px; }
.xg1 { width: 72px; } .xg2 { width: 234px; } .xg3 { width: 229px; } .xg4 { width: 136px; } .xg5 { width: 165px; } .xg6 { width: 120px; }
.excel .ribbon .group { height: 101px; }
.clip { display: flex; padding: 3px 6px 0 9px; justify-content: space-between; }
.clip3 { display: flex; flex-direction: column; gap: 6px; padding-top: 1px; }
.clip .i32 { margin-bottom: 3px; }
.split { display: flex; gap: 3px; }
.split .row { width: 118px; }
.mrg { border-left: 1px solid #a5c3e4; padding-left: 3px; height: 54px; margin-top: 2px; display: flex; flex-direction: column; gap: 10px; }
.xg3 .row { padding-top: 1px; gap: 3px; }
.txt { display: flex; align-items: center; gap: 3px; height: 22px; padding: 0 2px; align-self: flex-start; border: 1px solid transparent; }
.txt.act { border: 1px solid #b58a45; border-radius: 2px; }
.bigs { display: flex; padding: 4px 4px 0; gap: 2px; }
.bigs .big { min-width: 44px; }
.xg6 .bigs { padding-left: 1px; }
.xg5 .big:nth-child(1) { width: 52px; } .xg5 .big:nth-child(2) { width: 60px; }
.fbar { display: flex; height: 24px; flex: none; background: #fff; border-top: 2px solid #a9c6ec; border-bottom: 3px solid #cfe0f4; align-items: center; color: #000; }
.name { width: 140px; border: 0; text-align: center; font: 13px/18px var(--mono); padding: 0; height: 18px; }
.tri { font-size: 8px; width: 17px; text-align: center; }
.fx { display: flex; width: 76px; height: 19px; border: 1px solid #8fb1dc; border-radius: 10px 0 0 10px; background: linear-gradient(#e4eefa, #b4cdec); align-items: center; justify-content: space-between; padding: 0 4px; font: bold 14px/16px var(--serif); }
.fx i { width: 9px; height: 9px; border-radius: 50%; background: #cfdcec; border: 1px solid #9db4d4; }
.fx sub { font-size: 10px; line-height: 0; }
.formula { padding-left: 12px; font: 400 16px/18px var(--cjk); padding-bottom: 2px; }
.grid { flex: none; width: 100%; table-layout: fixed; border-collapse: separate; border-spacing: 0; font: 400 16px/18px var(--cjk); color: #000; white-space: nowrap; }
.c0 { width: 33px; } .ca { width: 149px; } .cc { width: 72px; }
.grid th, .grid td { padding: 0; height: 19px; border: 0 solid #d0d7e5; border-width: 0 1px 1px 0; }
.grid th { font: 13px/18px var(--mono); color: #24405c; background: #e4ecf7; border-color: #9eb6ce; vertical-align: bottom; text-align: center; }
.grid thead th { height: 20px; background: linear-gradient(#f6f8fc, #d3dbe9); border-top: 1px solid #6f93c4; line-height: 17px; }
.grid thead .sel-h { background: linear-gradient(#f9d99f, #f1bd5c); border-color: #e0913a; }
.grid thead .corner { background: linear-gradient(135deg, #a9c4e9 60%, #dbe7f6 61%); }
.grid tr td:nth-child(2), .grid tr td:nth-child(3) { border-color: #000; }
.grid tr td:nth-child(2) { border-right-width: 2px; padding-left: 1px; }
.grid tr td:nth-child(3) { border-right-width: 2px; padding-left: 2px; }
.grid .tall td, .grid .tall th { height: 29px; }
.grid .tall td { font-weight: 700; font-size: 24px; line-height: 28px; }
.grid .tall td:nth-child(2), .grid .tall td:nth-child(3) { padding-left: 4px; }
.tall .n { font-size: 20px; font-weight: 700; }
.grid .cur th { background: #ffd58d; border-color: #e0913a; }
.grid .note td { line-height: 19px; height: 76px; }
.active { position: relative; }
.active::after { content: ""; position: absolute; inset: 0; border: 1px solid #000; box-shadow: 0 0 0 1px #fff, 0 0 0 2px #000; }
.sheets { display: flex; flex: 1; min-height: 16px; margin-top: 2px; background: #a0b8de; align-items: stretch; }
.snav { width: 63px; background: #d3e3f8; }
.snav svg { width: 60px; height: 14px; margin-top: 1px; }
.sheet { background: #fff; color: #15428b; padding: 0 2px 0 9px; font: 14px/16px var(--cjk); }
.newsheet { width: 48px; height: 16px; }
.hscroll { margin-left: auto; width: 265px; display: flex; align-items: center; background: #8aa8d6; gap: 4px; }
.splitter { width: 7px; height: 15px; background: #fff; border: 1px solid #4f74ac; }
.thumb { flex: 1; height: 15px; background: linear-gradient(#eef3fa, #ccd6e6); border: 1px solid #5f7fae; display: grid; place-items: center; }
.status { height: 22px; flex: none; display: flex; justify-content: space-between; background: linear-gradient(#d4e4f9, #b8d1f3 45%, #d5e6fb); border-top: 1px solid #5f86c0; border-bottom: 1px solid #4a6a94; color: #15428b; line-height: 20px; }
.status span { border-right: 1px solid #9bb9e2; padding: 0 9px 0 7px; }
.views { width: 66px; background: #86a9dc; padding: 1px 4px; }
.views button { width: 21px; height: 18px; display: grid; place-items: center; background: #fbd68b; border: 1px solid #a8823c; }
.ball { position: absolute; right: -28px; top: 866px; width: 48px; height: 48px; border-radius: 50%; background: linear-gradient(#7fdf8a, #27b84b 60%, #39c95a); border: 2px solid #eef; box-shadow: 0 2px 8px #0008, inset 0 0 0 1px #17802f; color: #fff; font: bold 11px/44px "Open Sans", sans-serif; padding-left: 4px; }
```
